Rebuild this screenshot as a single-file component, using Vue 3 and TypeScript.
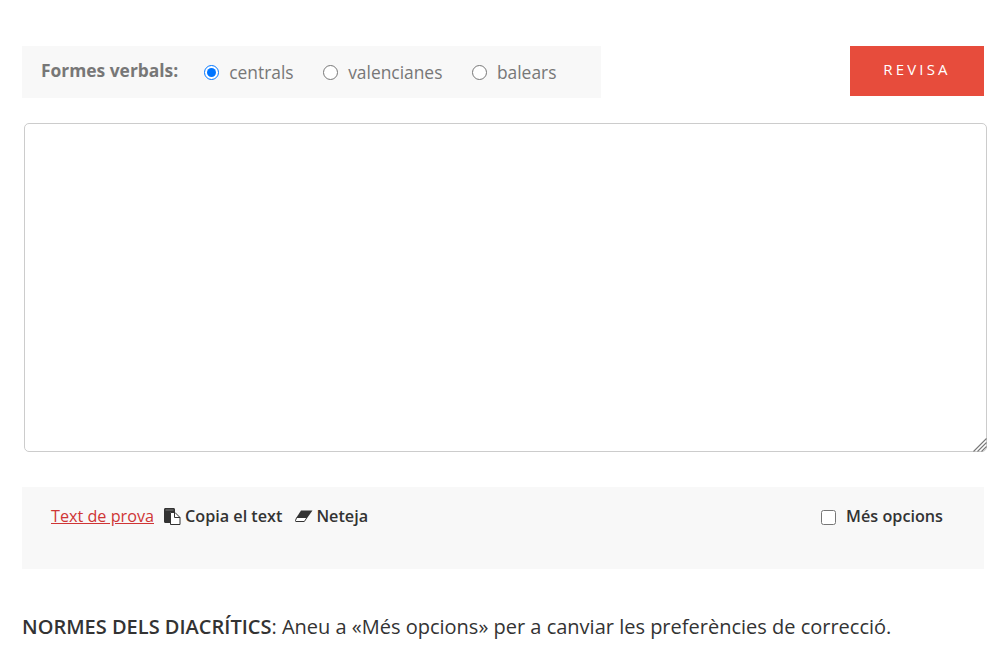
<script setup lang="ts">
const forms: { label: string; checked: boolean }[] = [
  { label: 'centrals', checked: true },
  { label: 'valencianes', checked: false },
  { label: 'balears', checked: false },
]
</script>

<template>
  <div class="page">
    <div class="top">
      <div class="forms">
        <strong class="forms-title">Formes verbals:</strong>
        <label v-for="f in forms" :key="f.label" class="radio">
          <input type="radio" name="forms" :checked="f.checked" />
          <span>{{ f.label }}</span>
        </label>
      </div>
      <button class="revisa" type="button">REVISA</button>
    </div>
    <div class="editor">
      <textarea class="text"></textarea>
      <svg class="grip" width="15" height="15" viewBox="0 0 15 15" aria-hidden="true">
        <path stroke="#777" stroke-width="1.1" d="M1.5 14.5L14.5 1.5M5.5 14.5L14.5 5.5M9.5 14.5L14.5 9.5" />
      </svg>
    </div>
    <div class="tools">
      <a class="sample" href="#">Text de prova</a>
      <span class="tool copy">
        <svg width="17" height="17" viewBox="0 0 17 17" aria-hidden="true">
          <path fill="#333" d="M0 1.500C0 .7.600 0 1.400 0h8.200c.8 0 1.400.7 1.400 1.500V4H7.600C6.700 4 6 4.700 6 5.600V15H1.400C.6 15 0 14.300 0 13.500z" />
          <path stroke="#999" stroke-width="0.7" d="M1.500 2h8" />
          <path fill="#fff" stroke="#333" stroke-width="1" stroke-linejoin="round" d="M6.500 4.500h4.500l5 5v7h-9.500z" />
          <path fill="none" stroke="#333" stroke-width="1" d="M10.500 4.500v5h5.500" />
        </svg>
        Copia el text
      </span>
      <span class="tool clear">
        <svg width="18" height="13" viewBox="0 0 18 13" aria-hidden="true">
          <path fill="#333" d="M6 0.500H17.500L12.500 7.500H1.500z" />
          <path fill="#fff" stroke="#333" stroke-width="1" d="M1.700 7.500h10.300l-2.700 4H1c-.5 0-.8-.5-.5-1z" />
        </svg>
        Neteja
      </span>
      <label class="more">
        <input type="checkbox" />
        <span>Més opcions</span>
      </label>
    </div>
    <p class="note"><strong class="note-title">NORMES DELS DIACRÍTICS</strong>: Aneu a «Més opcions» per a canviar les preferències de correcció.</p>
  </div>
</template>

<style scoped>
.page {
  box-sizing: border-box;
  width: 1007px;
  height: 659px;
  overflow: hidden;
  padding: 46px 23px 0 22px;
  font-family: "Open Sans", sans-serif;
  color: #333;
}
.top {
  display: flex;
  justify-content: space-between;
  align-items: flex-start;
}
.forms {
  display: flex;
  align-items: center;
  width: 579px;
  height: 52px;
  padding-left: 19px;
  box-sizing: border-box;
  background: #f8f8f8;
  color: #777;
  font-size: 17.4px;
}
.forms-title {
  font-weight: 700;
  margin-right: 26px;
  position: relative;
  top: -2px;
}
.radio {
  display: flex;
  align-items: center;
  margin-right: 29.5px;
}
.radio input {
  width: 15px;
  height: 15px;
  margin: 0 10px 0 0;
}
.revisa {
  width: 134px;
  height: 50px;
  border: 0;
  padding: 0 0 4px;
  background: #e74c3c;
  color: #fff;
  font-family: inherit;
  font-size: 15px;
  font-weight: 400;
  letter-spacing: 3.2px;
}
.editor {
  position: relative;
  width: 963px;
  height: 329px;
  margin: 25px 0 0 2px;
}
.text {
  display: block;
  box-sizing: border-box;
  width: 100%;
  height: 100%;
  border: 1px solid #ccc;
  border-radius: 5px;
  background: #fff;
  outline: none;
  resize: none;
}
.grip {
  position: absolute;
  right: 0;
  bottom: 0;
}
.tools {
  display: flex;
  align-items: flex-start;
  height: 82px;
  box-sizing: border-box;
  margin-top: 35px;
  padding: 18px 41px 0 29px;
  background: #f8f8f8;
  font-size: 16.2px;
  line-height: 22px;
}
.sample {
  color: #cf3535;
  text-decoration: underline;
  margin-right: 10px;
}
.tool {
  display: flex;
  align-items: center;
  font-weight: 600;
  margin-right: 13px;
  gap: 4px;
}
.tool.clear {
  gap: 3px;
}
.more {
  margin-left: auto;
  display: flex;
  align-items: center;
  font-weight: 600;
}
.more input {
  width: 15px;
  height: 15px;
  margin: 2px 10px 0 0;
}
.note {
  margin: 46px 0 0;
  font-size: 20px;
  line-height: 24px;
}
.note-title {
  font-weight: 600;
}
</style>
